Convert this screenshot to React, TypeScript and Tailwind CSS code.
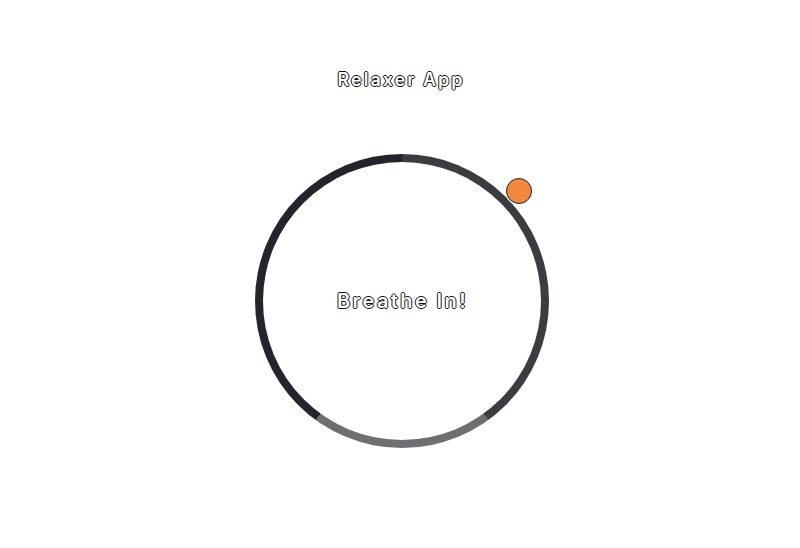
import React from "react";

export default function App() {
  return (
    <div className="w-[800px] h-[548px] bg-white flex flex-col items-center font-['Inter',sans-serif] antialiased">
      <h1 className="mt-[68px] ml-[2px] text-[18px] leading-[24px] font-semibold text-white tracking-[2px] [text-shadow:1px_0_0_#111,-1px_0_0_#111,0_1px_0_#111,0_-1px_0_#111]">
        Relaxer App
      </h1>
      <div className="relative mt-[62px] ml-[3px] w-[294px] h-[294px]">
        <div className="absolute inset-0 rounded-full bg-[conic-gradient(#3b3d42_0deg,#3b3d42_144deg,#6f6e73_144deg,#6f6e73_216deg,#22252c_216deg,#22252c_360deg)]" />
        <div className="absolute inset-[8px] rounded-full bg-white flex items-center justify-center">
          <span className="ml-[2px] text-[20px] leading-[26px] font-semibold text-white tracking-[2.4px] [text-shadow:1px_0_0_#111,-1px_0_0_#111,0_1px_0_#111,0_-1px_0_#111]">
            Breathe In!
          </span>
        </div>
        <div className="absolute left-[251px] top-[24px] w-[26px] h-[26px] rounded-full bg-[#f0883e] border-[1.5px] border-[#222] shadow-[0_0_0_1px_#fff]" />
      </div>
    </div>
  );
}
